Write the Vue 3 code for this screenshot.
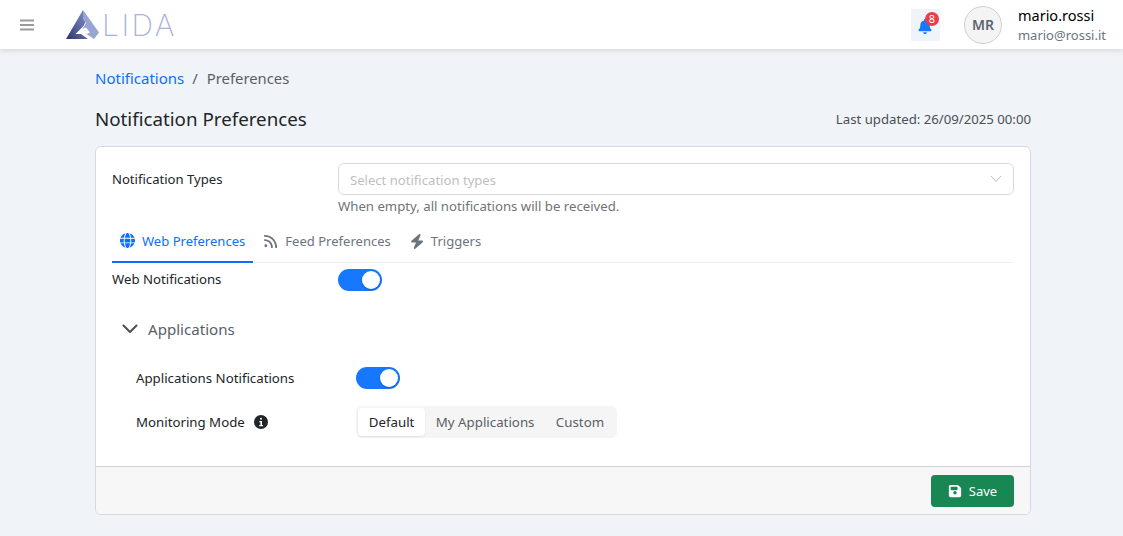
<template>
  <div class="page">
    <header class="topbar">
      <div class="topbar-left">
        <button class="menu-btn" aria-label="Menu">
          <svg width="14" height="12" viewBox="0 0 14 12"><path d="M0 0.5h14v2H0zM0 5h14v2H0zM0 9.5h14v2H0z" fill="#9a9a9a" /></svg>
        </button>
        <div class="logo">
          <svg class="logo-mark" width="34" height="30" viewBox="0 0 34 30">
            <defs>
              <linearGradient id="logoGrad" x1="0" y1="1" x2="1" y2="0.1">
                <stop offset="0" stop-color="#2f3368" />
                <stop offset="0.6" stop-color="#626ea8" />
                <stop offset="1" stop-color="#7f8cc0" />
              </linearGradient>
            </defs>
            <path d="M17 0 0 29h22l-7-5H9.500l5-5 3-3 2-4-2.500-4z" fill="url(#logoGrad)" />
            <path d="M17 0 33 22.500 28 29 20.500 24 24 22.500 20 17.500 16.500 19 20 13 17 8z" fill="#98a5d3" />
          </svg>
          <span class="logo-text">LIDA</span>
        </div>
      </div>
      <div class="topbar-right">
        <div class="bell">
          <svg width="14" height="15" viewBox="0 0 448 512"><path d="M224 0c-18 0-32 14-32 32v19C119 66 64 131 64 208v19c0 47-17 92-48 127l-7 8c-8 9-10 22-5 34s16 19 29 19h382c13 0 24-7 29-19s3-25-5-34l-7-8c-31-35-48-80-48-127v-19c0-77-55-142-128-157V32c0-18-14-32-32-32zm45 493c12-12 19-28 19-45H160c0 17 7 33 19 45s28 19 45 19 33-7 45-19z" fill="#1677ff" /></svg>
          <span class="badge">8</span>
        </div>
        <div class="avatar">MR</div>
        <div class="user">
          <div class="user-name">mario.rossi</div>
          <div class="user-mail">mario@rossi.it</div>
        </div>
      </div>
    </header>

    <main class="content">
      <nav class="breadcrumb">
        <a class="crumb-link">Notifications</a>
        <span class="crumb-sep">/</span>
        <span class="crumb-current">Preferences</span>
      </nav>

      <div class="title-row">
        <h1>Notification Preferences</h1>
        <span class="updated">Last updated: 26/09/2025 00:00</span>
      </div>

      <section class="card">
        <div class="card-body">
          <div class="type-row">
            <label class="type-label">Notification Types</label>
            <div class="type-field">
              <div class="select">
                <span class="placeholder">Select notification types</span>
                <svg width="12" height="12" viewBox="0 0 12 12"><path d="M1 3 6 8.500 11 3" fill="none" stroke="#bdbdbd" stroke-width="1" /></svg>
              </div>
              <div class="hint">When empty, all notifications will be received.</div>
            </div>
          </div>

          <div class="tabs">
            <div v-for="tab in tabs" :key="tab.name" class="tab" :class="{ active: tab.active }">
              <svg width="15" height="15" :viewBox="tab.box"><path :d="tab.icon" fill="currentColor" /></svg>
              <span>{{ tab.name }}</span>
            </div>
          </div>

          <div class="switch-row">
            <span class="switch-label">Web Notifications</span>
            <span class="switch"><span class="knob"></span></span>
          </div>

          <div class="section-head">
            <svg width="16" height="10" viewBox="0 0 16 10"><path d="M1.500 1.500 8 8l6.500-6.500" fill="none" stroke="#495057" stroke-width="2" stroke-linecap="round" stroke-linejoin="round" /></svg>
            <span>Applications</span>
          </div>

          <div class="section-body">
            <div class="app-row">
              <span class="app-label">Applications Notifications</span>
              <span class="switch"><span class="knob"></span></span>
            </div>
            <div class="app-row mode-row">
              <span class="app-label">
                Monitoring Mode
                <svg class="info" width="14" height="14" viewBox="0 0 14 14">
                  <circle cx="7" cy="7" r="7" fill="#212529" />
                  <rect x="6" y="2.800" width="2" height="2" rx="1" fill="#fff" />
                  <path d="M5.300 6h2.700v4h1v1.200H5.200V10h1.200V7.200H5.300z" fill="#fff" />
                </svg>
              </span>
              <div class="segmented">
                <span v-for="mode in modes" :key="mode" class="segment" :class="{ selected: mode === 'Default' }">{{ mode }}</span>
              </div>
            </div>
          </div>
        </div>

        <footer class="card-footer">
          <button class="save">
            <svg width="14" height="14" viewBox="0 0 448 512"><path d="M64 32C29 32 0 61 0 96v320c0 35 29 64 64 64h320c35 0 64-29 64-64V173c0-17-7-33-19-45l-77-77c-12-12-28-19-45-19H64zm0 96c0-18 14-32 32-32h192c18 0 32 14 32 32v64c0 18-14 32-32 32H96c-18 0-32-14-32-32v-64zm160 128a64 64 0 1 1 0 128 64 64 0 1 1 0-128z" fill="#fff" /></svg>
            Save
          </button>
        </footer>
      </section>
    </main>
  </div>
</template>

<script setup>
const tabs = [
  {
    name: 'Web Preferences',
    active: true,
    box: '0 0 512 512',
    icon: 'M352 256c0 22-1 44-3 64H163c-2-20-3-42-3-64s1-44 3-64h186c2 20 3 42 3 64zm29-64h123c5 20 8 42 8 64s-3 44-8 64H381c2-21 3-42 3-64s-1-43-3-64zm113-32H378c-10-64-30-118-55-152 76 20 138 75 171 152zm-149 0H167c6-37 15-69 27-96 10-24 22-41 33-52 12-10 22-12 29-12s17 2 29 12c11 11 23 28 33 52 12 27 21 59 27 96zm-211 0H18C51 83 113 28 189 8c-25 34-45 88-55 152zM8 192h123c-2 21-3 42-3 64s1 43 3 64H8c-5-20-8-42-8-64s3-44 8-64zm186 256c-12-27-21-59-27-96h178c-6 37-15 69-27 96-10 24-22 41-33 52-12 10-22 12-29 12s-17-2-29-12c-11-11-23-28-33-52zm-5 56C113 484 51 429 18 352h116c10 64 30 118 55 152zm134 0c25-34 45-88 55-152h116c-33 77-95 132-171 152z'
  },
  {
    name: 'Feed Preferences',
    active: false,
    box: '0 0 448 512',
    icon: 'M0 64c0-18 14-32 32-32 229 0 416 187 416 416 0 18-14 32-32 32s-32-14-32-32C384 254 226 96 32 96 14 96 0 82 0 64zm0 144c0-18 14-32 32-32 150 0 272 122 272 272 0 18-14 32-32 32s-32-14-32-32c0-115-93-208-208-208-18 0-32-14-32-32zm64 144a48 48 0 1 1 0 96 48 48 0 1 1 0-96z'
  },
  {
    name: 'Triggers',
    active: false,
    box: '0 0 448 512',
    icon: 'M349 5c11 8 15 23 10 36L285 224h131c13 0 25 8 30 20s2 26-8 35L182 503c-11 9-27 10-38 2s-16-23-11-36l74-181H75c-13 0-25-8-30-20s-1-26 8-35L309 9c11-9 28-10 40-4z'
  }
]

const modes = ['Default', 'My Applications', 'Custom']
</script>

<style scoped>
.page {
  min-height: 536px;
  background: #f0f3f8;
  font-family: "Noto Sans", "Open Sans", sans-serif;
  font-size: 14px;
  color: #212529;
}

.topbar {
  height: 49px;
  background: #fff;
  box-shadow: 0 1px 6px rgba(0, 0, 0, 0.14);
  display: flex;
  align-items: center;
  justify-content: space-between;
  padding: 0 17px 0 20px;
}

.topbar-left,
.topbar-right {
  display: flex;
  align-items: center;
}

.menu-btn {
  background: none;
  border: none;
  padding: 0;
  width: 14px;
  height: 12px;
  display: flex;
  margin-right: 32px;
}

.logo {
  display: flex;
  align-items: flex-end;
  height: 30px;
}

.logo-mark {
  display: block;
}

.logo-text {
  font-family: Inter, sans-serif;
  font-weight: 200;
  font-size: 30px;
  line-height: 30px;
  letter-spacing: 2.5px;
  color: #a8b3d9;
  margin-left: 2px;
}

.bell {
  position: relative;
  width: 29px;
  height: 32px;
  background: #eff4fb;
  display: flex;
  align-items: center;
  justify-content: center;
  margin-right: 24px;
}

.bell svg {
  margin-top: 3px;
  margin-right: 1px;
}

.badge {
  position: absolute;
  top: 3px;
  right: 1px;
  width: 14px;
  height: 14px;
  border-radius: 50%;
  background: #ef3a47;
  color: #fff;
  font-size: 11px;
  line-height: 14px;
  text-align: center;
}

.avatar {
  width: 36px;
  height: 36px;
  border-radius: 50%;
  border: 1px solid #cfcfcf;
  background: #f4f4f4;
  color: #5c6670;
  font-size: 14px;
  font-weight: 600;
  display: flex;
  align-items: center;
  justify-content: center;
  margin-right: 16px;
}

.user-name {
  font-size: 14.5px;
  line-height: 20px;
  color: #000;
}

.user-mail {
  font-size: 13px;
  line-height: 20px;
  color: #6c757d;
}

.content {
  width: 936px;
  margin-left: 95px;
}

.breadcrumb {
  display: flex;
  align-items: center;
  gap: 8px;
  padding-top: 19px;
  font-size: 15px;
  line-height: 20px;
  color: #595f66;
}

.crumb-link {
  color: #0d6efd;
}

.crumb-sep {
  margin-right: 1px;
}

.crumb-current {
  font-size: 14.8px;
}

.title-row {
  display: flex;
  justify-content: space-between;
  align-items: center;
  margin-top: 16px;
  height: 30px;
}

h1 {
  margin: 0 0 2px;
  font-size: 18.75px;
  font-weight: 400;
  color: #212529;
}

.updated {
  font-size: 13.2px;
  color: #495057;
}

.card {
  margin-top: 12px;
  background: #fff;
  border: 1px solid #d5d8dc;
  border-radius: 6px;
  overflow: hidden;
}

.card-body {
  padding: 16px 16px 0;
  height: 303px;
}

.type-row {
  display: flex;
}

.type-label {
  width: 226px;
  font-size: 13.1px;
  line-height: 32px;
}

.type-field {
  flex: 1;
}

.select {
  height: 32px;
  box-sizing: border-box;
  border: 1px solid #d9d9d9;
  border-radius: 6px;
  padding: 0 11px;
  display: flex;
  align-items: center;
  justify-content: space-between;
  color: #bfbfbf;
  font-size: 13.1px;
}

.placeholder {
  margin-top: 1px;
}

.hint {
  margin-top: 1px;
  font-size: 13.2px;
  line-height: 20px;
  color: #6f7479;
}

.tabs {
  display: flex;
  gap: 2px;
  margin-top: 4px;
  height: 42px;
  border-bottom: 1px solid #eceef0;
}

.tab {
  display: flex;
  align-items: center;
  gap: 7px;
  padding: 0 8px;
  font-size: 13.05px;
  color: #6c757d;
}

.tab svg {
  flex: none;
}

.tab.active {
  color: #0d6efd;
  border-bottom: 2px solid #0d6efd;
  margin-bottom: -1px;
}

.switch-row {
  display: flex;
  align-items: center;
  justify-content: flex-start;
  margin-top: 6px;
  height: 22px;
}

.switch-label {
  width: 226px;
  font-size: 13.2px;
  margin-top: -2px;
}

.switch {
  width: 44px;
  height: 22px;
  border-radius: 11px;
  background: #1677ff;
  position: relative;
  display: block;
  flex: none;
}

.knob {
  position: absolute;
  top: 2px;
  right: 2px;
  width: 18px;
  height: 18px;
  border-radius: 50%;
  background: #fff;
  box-shadow: 0 1px 2px rgba(0, 0, 0, 0.2);
}

.section-head {
  display: flex;
  align-items: center;
  gap: 10px;
  margin-top: 26px;
  padding-left: 10px;
  height: 24px;
  font-size: 15.1px;
  color: #595f66;
}

.section-body {
  padding-left: 24px;
  margin-top: 26px;
}

.app-row {
  display: flex;
  align-items: center;
  height: 22px;
}

.app-label {
  width: 220px;
  font-size: 13.25px;
  display: flex;
  align-items: center;
  gap: 9px;
}

.mode-row {
  margin-top: 17px;
  height: 32px;
}

.segmented {
  display: flex;
  background: #f5f5f5;
  border-radius: 6px;
  padding: 2px;
  height: 32px;
  box-sizing: border-box;
}

.segment {
  padding: 0 10.7px;
  line-height: 28px;
  font-size: 13.3px;
  color: #595f66;
}

.segment.selected {
  background: #fff;
  border-radius: 4px;
  color: #212529;
  box-shadow: 0 1px 2px rgba(0, 0, 0, 0.08);
}

.card-footer {
  border-top: 1px solid #cfd2d6;
  background: #f7f7f7;
  height: 48px;
  box-sizing: border-box;
  padding: 8px 16px;
  display: flex;
  justify-content: flex-end;
}

.save {
  width: 83px;
  height: 32px;
  border: none;
  border-radius: 4px;
  background: #198754;
  color: #fff;
  font-family: inherit;
  font-size: 13px;
  display: flex;
  align-items: center;
  justify-content: center;
  gap: 7px;
}
</style>

<style>
body {
  margin: 0;
}
</style>
